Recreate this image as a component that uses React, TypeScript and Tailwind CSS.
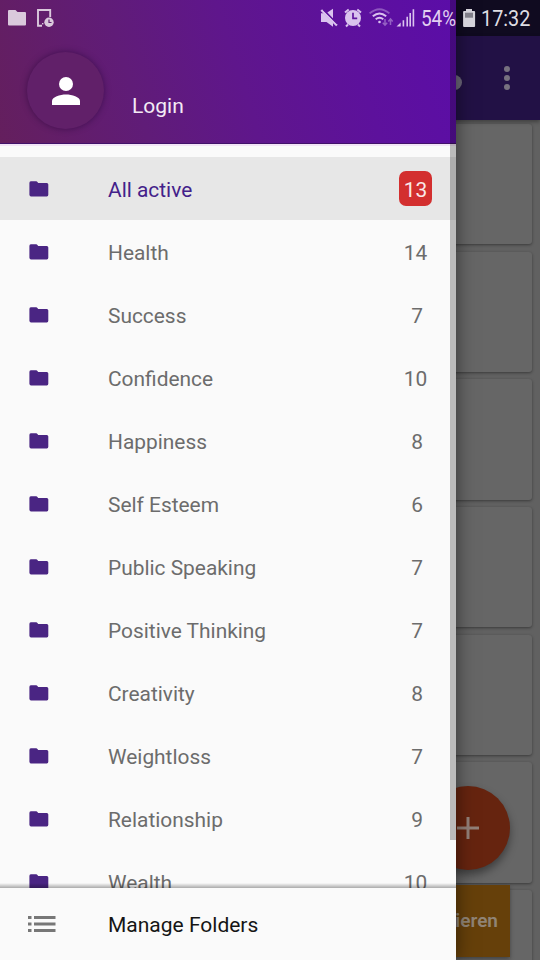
const folders: { name: string; count: number }[] = [
  { name: 'All active', count: 13 },
  { name: 'Health', count: 14 },
  { name: 'Success', count: 7 },
  { name: 'Confidence', count: 10 },
  { name: 'Happiness', count: 8 },
  { name: 'Self Esteem', count: 6 },
  { name: 'Public Speaking', count: 7 },
  { name: 'Positive Thinking', count: 7 },
  { name: 'Creativity', count: 8 },
  { name: 'Weightloss', count: 7 },
  { name: 'Relationship', count: 9 },
  { name: 'Wealth', count: 10 },
];

function FolderIcon() {
  return (
    <svg className="ml-[29px] mt-px h-4 w-[20px] shrink-0" viewBox="0 0 20 16" fill="#4a2583">
      <path d="M1.800.3h5.400q.8 0 1.200.6L9.200 2H17.800a1.600 1.600 0 0 1 1.500 1.600v10.200a1.600 1.600 0 0 1-1.500 1.600H1.800A1.600 1.600 0 0 1 .4 13.800V1.900A1.600 1.600 0 0 1 1.800.3z" />
    </svg>
  );
}

function StatusBar() {
  return (
    <div className="absolute inset-x-0 top-0 z-30 h-9 text-[#dfd3e8]">
      <svg className="h-9 w-[540px]" viewBox="0 0 540 36" fill="currentColor">
        <path d="M9 10h6.500l2 2H25q1 0 1 1v11.500q0 1-1 1H9q-1 0-1-1V11q0-1 1-1z" fill="#dac9dc" />
        <path d="M42 25.700H38V10h12.200v7" fill="none" stroke="#dac9dc" strokeWidth="1.900" />
        <circle cx="49" cy="22.300" r="4.700" fill="#dac9dc" />
        <path d="M49 19.500v3h2.500" fill="none" stroke="#602071" strokeWidth="1.200" />
        <rect x="42" y="23" width="1.400" height="1.400" fill="#dac9dc" />
        <g fill="#dac3ee">
          <path d="M321 13.300h2.700l9.300 9.300v4.200l-6.500-4.800H321zM327.300 12.600l5.700-3.900v9.800z" />
          <path d="M321.300 10l15.600 15.500" stroke="#dac3ee" strokeWidth="2.200" />
          <path d="M323.500 9.800l14 14" stroke="#5f149c" strokeWidth="1.200" />
        </g>
        <g>
          <circle cx="353" cy="18" r="8" fill="#dac3ee" />
          <path d="M345 12.500l3.700-3M361 12.500l-3.700-3M348 24.500l-2 2M358 24.500l2 2" stroke="#dac3ee" strokeWidth="2" />
          <path d="M353 12.800v5.600h4.200" stroke="#60159e" strokeWidth="1.700" fill="none" />
        </g>
        <g fill="none" stroke="#dac3ee" strokeWidth="1.900">
          <path d="M369.600 13.400q9.900-8.500 19.800 0" opacity=".4" />
          <path d="M372.800 16.300q6.700-5.800 13.400 0M375.700 19.300q3.800-3.200 7.600 0" />
          <circle cx="379.500" cy="22" r="1.300" fill="#dac3ee" stroke="none" />
          <path d="M385 19v6M382.800 22.700l2.200 2.500 2.200-2.500M390.500 25v-5.500M388.300 21.500l2.200-2.500 2.200 2.500" strokeWidth="1.500" opacity=".45" />
        </g>
        <path d="M396.500 26.600l4.200-4.200v4.200zM402.600 20.300h1.600v6.300h-1.600zM406.400 16.800h1.600v9.800h-1.600zM409.400 13h1.600v13.600h-1.600zM412.600 9.300h1.600v17.300h-1.600z" fill="#dac3ee" />
        <path d="M466 9h6v2h2.200q.9 0 .9.900V26q0 1-1 1h-10q-1 0-1-1V11.900q0-.9.900-.9H466z" fill="#d4d2da" />
        <path d="M465 12.700h8v5h-8z" fill="#807e89" />
      </svg>
      <span className="absolute left-[421px] top-[5px] origin-left scale-x-[0.84] text-[22.500px] leading-[26px] text-[#e2d0f1]">54%</span>
      <span className="absolute left-[481px] top-[5px] origin-left scale-x-[0.88] text-[22.500px] leading-[26px] text-[#dfdde3]">17:32</span>
    </div>
  );
}

function DimmedPage() {
  return (
    <div className="flex h-full flex-col bg-[#616161]">
      <div className="h-9 shrink-0 bg-[#100b20]" />
      <div className="z-10 flex h-[84px] shrink-0 items-center justify-end bg-[#221145] pr-[30px] shadow-[0_2px_4px_rgba(0,0,0,0.35)]">
        <span className="mr-[42px] mt-[8px] size-[15px] rounded-full bg-[#6d687b]" />
        <div className="flex flex-col gap-[3px]">
          <i className="size-[6px] rounded-full bg-[#77717f]" />
          <i className="size-[6px] rounded-full bg-[#77717f]" />
          <i className="size-[6px] rounded-full bg-[#77717f]" />
        </div>
      </div>
      <div className="flex flex-col gap-[7.500px] pr-2 pt-[4px]">
        {[0, 1, 2, 3, 4, 5, 6].map((i) => (
          <div key={i} className="h-[120.200px] shrink-0 rounded-[3px] bg-[#666666] shadow-[0_1px_3px_rgba(0,0,0,0.4)]" />
        ))}
      </div>
    </div>
  );
}

export default function App() {
  return (
    <div className="relative h-[960px] w-[540px] overflow-hidden font-[Roboto,sans-serif]">
      <DimmedPage />
      <div className="absolute left-[426px] top-[786px] z-10 flex size-[84px] items-center justify-center rounded-full bg-[#66240f] shadow-[0_5px_9px_rgba(0,0,0,0.4)]">
        <svg className="size-[22px]" viewBox="0 0 22 22" stroke="#928079" strokeWidth="3">
          <path d="M11 0v22M0 11h22" />
        </svg>
      </div>
      <div className="absolute left-[380px] top-[885px] z-10 flex h-[72px] w-[130px] items-center justify-end bg-[#66400a] pr-[12px] text-[19px] font-semibold text-[#908476] shadow-[0_2px_4px_rgba(0,0,0,0.35)]">
        ieren
      </div>

      <aside className="absolute inset-y-0 left-0 z-20 flex w-[456px] flex-col bg-[#fafafa] shadow-[0_0_18px_rgba(0,0,0,0.5)]">
        <header className="flex h-[144px] shrink-0 border-b border-[#41116a] bg-[linear-gradient(72deg,#641f5d_0%,#601c78_30%,#5f168c_52%,#5d119c_76%,#5b0da8_100%)] pl-[27px] pt-[52px]">
          <div className="flex size-[77px] items-center justify-center rounded-full bg-[#612069] shadow-[0_0_6px_rgba(30,0,50,0.5)]">
            <svg className="size-[28px]" viewBox="0 0 28 28" fill="#fff">
              <circle cx="14" cy="7" r="7" />
              <path d="M0 28v-4c0-4 8-6.500 14-6.500S28 20 28 24v4z" />
            </svg>
          </div>
          <span className="ml-[28px] mt-[41px] text-[21px] leading-[26px] text-[#f3eaf5]">Login</span>
        </header>
        <div className="h-[2px] shrink-0 bg-[#f2e4f6]" />
        <nav className="flex min-h-0 flex-1 flex-col overflow-hidden pt-[11px]">
          {folders.map((folder, i) => (
            <div
              key={folder.name}
              className={`flex h-[63px] shrink-0 items-center text-[20.900px] ${i === 0 ? 'bg-[#e7e7e7] text-[#43218a]' : 'text-[#6c6c6c]'}`}
            >
              <FolderIcon />
              <span className="ml-[59px] flex-1 pt-[5px]">{folder.name}</span>
              <span
                className={`mr-[24px] flex h-[35px] min-w-[33px] items-center justify-center pt-[5px] ${i === 0 ? 'rounded-[7px] bg-[#d32f2f] text-[#f9e9e9]' : folder.count < 10 ? 'pl-[3px]' : ''}`}
              >
                {folder.count}
              </span>
            </div>
          ))}
        </nav>
        <div className="z-10 -mt-[5px] h-[5px] shrink-0 bg-[linear-gradient(to_bottom,transparent,rgba(0,0,0,0.32))]" />
        <footer className="z-10 flex h-[72px] shrink-0 items-center bg-[#fafafa] text-[21px] text-[#151515]">
          <svg className="ml-[28px] h-4 w-7" viewBox="0 0 28 16" fill="#777">
            <path d="M0 0h3.500v3H0zM6 0h21.500v3H6zM0 6.500h3.500v3H0zM6 6.500h21.500v3H6zM0 13h3.500v3H0zM6 13h21.500v3H6z" />
          </svg>
          <span className="ml-[52px] pt-[3px]">Manage Folders</span>
        </footer>
        <div className="absolute right-0 top-0 z-20 h-[840px] w-[6px] bg-black/25" />
      </aside>
      <StatusBar />
    </div>
  );
}
